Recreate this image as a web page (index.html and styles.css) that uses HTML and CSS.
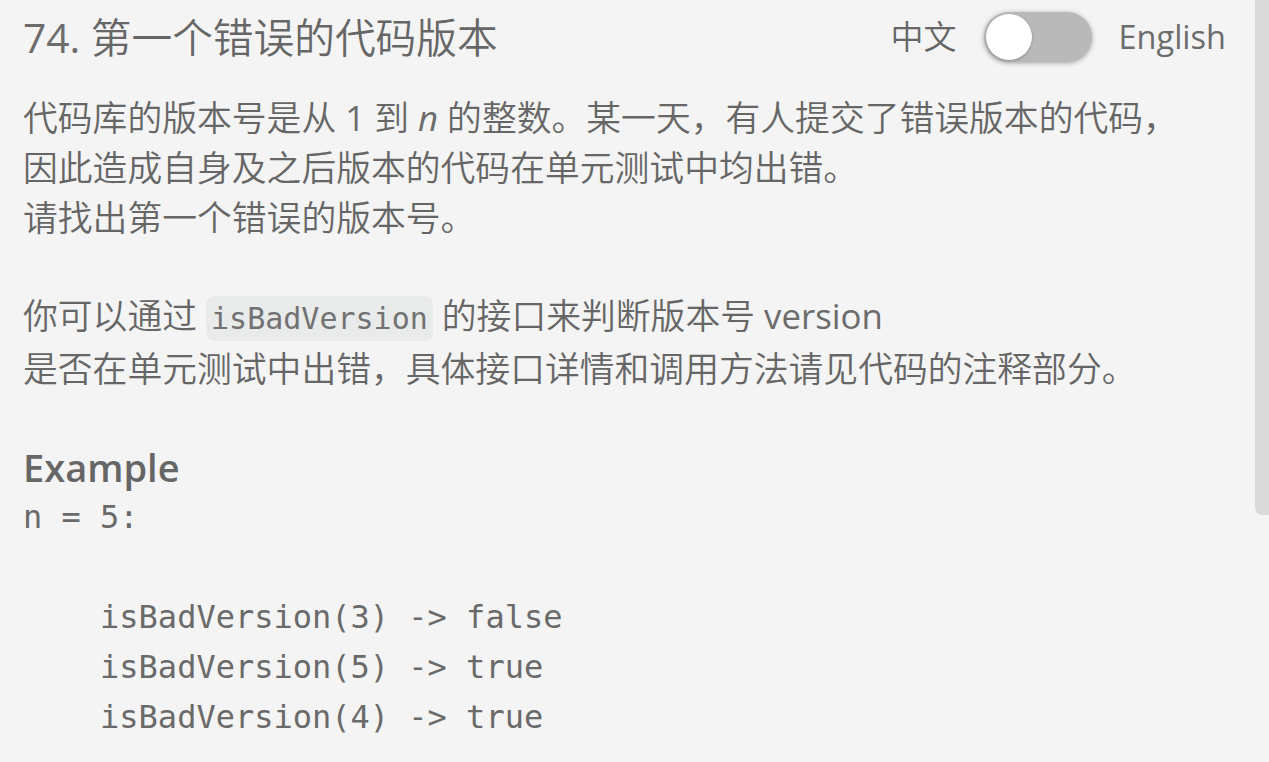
FILE: index.html
```html
<!DOCTYPE html>
<html lang="zh-CN">
<head>
<meta charset="utf-8">
<title>74. 第一个错误的代码版本</title>
<link rel="stylesheet" href="styles.css">
</head>
<body>
<div class="page">
  <main class="content">
    <header class="header">
      <h1 class="title"><span class="latin">74.</span> 第一个错误的代码版本</h1>
      <div class="lang">
        <span class="lang-label">中文</span>
        <div class="switch"><span class="knob"></span></div>
        <span class="lang-label latin">English</span>
      </div>
    </header>
    <p class="para first">代码库的版本号是从 <span class="latin">1</span> 到 <em class="latin">n</em> 的整数。某一天，有人提交了错误版本的代码，<br>因此造成自身及之后版本的代码在单元测试中均出错。<br>请找出第一个错误的版本号。</p>
    <p class="para">你可以通过 <code class="inline-code">isBadVersion</code> 的接口来判断版本号 <span class="latin">version</span><br>是否在单元测试中出错，具体接口详情和调用方法请见代码的注释部分。</p>
    <h2 class="section-title">Example</h2>
    <pre class="code-block">n = 5:

    isBadVersion(3) -&gt; false
    isBadVersion(5) -&gt; true
    isBadVersion(4) -&gt; true</pre>
  </main>
  <aside class="scrollbar"><div class="thumb"></div></aside>
</div>
</body>
</html>
```

FILE: styles.css
```css
html, body {
  margin: 0;
  padding: 0;
  height: 100%;
  overflow: hidden;
  background: #f4f4f4;
}

body {
  font-family: "Open Sans", "Noto Sans CJK SC", sans-serif;
  color: #666666;
}

.latin {
  font-weight: 400;
  color: #6c6c6c;
}

.page {
  display: flex;
  height: 762px;
}

.content {
  flex: 1;
  padding: 0 29px 0 23px;
  min-width: 0;
}

.header {
  height: 73px;
  display: flex;
  align-items: center;
  justify-content: space-between;
}

.title {
  margin: 0;
  font-size: 40.7px;
  font-weight: 350;
  line-height: 50px;
}

.lang {
  display: flex;
  align-items: center;
  gap: 27px;
}

.lang-label {
  font-size: 33px;
  font-weight: 350;
  line-height: 50px;
}

.lang-label.latin {
  font-size: 32.5px;
  font-weight: 400;
}

.switch {
  width: 108px;
  height: 50px;
  border-radius: 25px;
  background: #b9b9b9;
  box-shadow: 0 1px 5px rgba(0, 0, 0, 0.35);
  display: flex;
  align-items: center;
  padding: 0 2px;
  box-sizing: border-box;
}

.knob {
  width: 46px;
  height: 46px;
  border-radius: 50%;
  background: #ffffff;
  box-shadow: 0 1px 3px rgba(0, 0, 0, 0.25);
}

.para {
  margin: 48px 0 0;
  font-size: 34.8px;
  font-weight: 350;
  line-height: 50px;
}

.para.first {
  margin-top: 20px;
}

.para em {
  font-style: italic;
}

.inline-code {
  font-family: "DejaVu Sans Mono", monospace;
  font-size: 30px;
  font-weight: 400;
  color: #727272;
  background: #e9eaea;
  border-radius: 8px;
  padding: 5px 5px;
}

.section-title {
  margin: 48px 0 0;
  font-size: 38px;
  font-weight: 600;
  line-height: 50px;
}

.code-block {
  margin: 0;
  font-family: "DejaVu Sans Mono", monospace;
  font-size: 32px;
  line-height: 50px;
  color: #6a6a6a;
}

.scrollbar {
  width: 14px;
  flex: none;
}

.thumb {
  height: 515px;
  background: #dadada;
  border-bottom-left-radius: 8px;
}
```
